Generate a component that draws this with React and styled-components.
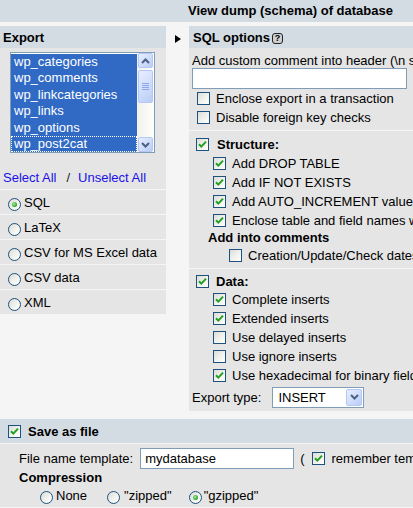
import React from "react";
import styled, { createGlobalStyle } from "styled-components";

const GlobalStyle = createGlobalStyle`
  html, body {
    margin: 0;
    padding: 0;
    background: #f5f5f5;
    overflow: hidden;
  }
  body {
    font-family: "Liberation Sans", Arial, sans-serif;
    font-size: 13px;
    color: #000;
  }
`;

const Page = styled.div`
  width: 413px;
  height: 508px;
  overflow: hidden;
`;

const TitleBar = styled.div`
  height: 22px;
  line-height: 22px;
  background: #d3dce3;
  font-weight: bold;
  padding-left: 188px;
  white-space: nowrap;
`;

const Main = styled.div`
  display: flex;
  align-items: flex-start;
  margin-top: 4px;
`;

const LeftPanel = styled.div`
  width: 166px;
  flex: none;
`;

const PanelHead = styled.div`
  height: 22px;
  background: #d3dce3;
  font-weight: bold;
  padding-left: ${p => p.$pad}px;
  display: flex;
  align-items: center;
  white-space: nowrap;
`;

const LeftBody = styled.div`
  background: #e5e5e5;
`;

const ListCell = styled.div`
  height: 118px;
  box-sizing: border-box;
  padding: 4px 0 0 10px;
`;

const ListBox = styled.div`
  width: 145px;
  height: 101px;
  box-sizing: border-box;
  border: 1px solid #7f9db9;
  background: #fff;
  display: flex;
`;

const Options = styled.div`
  flex: 1;
  overflow: hidden;
  padding-top: 1px;
`;

const Option = styled.div`
  height: 16.4px;
  line-height: 16.4px;
  padding-left: 3px;
  background: #316ac5;
  color: #fff;
  white-space: nowrap;
  outline: ${p => (p.$focus ? "1px dotted #fff" : "none")};
  outline-offset: -1px;
`;

const ScrollTrack = styled.div`
  width: 17px;
  flex: none;
  background: linear-gradient(90deg, #f3f1ec, #fefefb);
  display: flex;
  flex-direction: column;
  align-items: center;
`;

const ScrollPart = styled.div`
  width: 15px;
  height: ${p => p.$h}px;
  margin-top: ${p => p.$mt || 0}px;
  box-sizing: border-box;
  border: 1px solid #b4c8f6;
  border-radius: 2px;
  background: linear-gradient(135deg, #e8effe, #bacdf8);
  display: flex;
  align-items: center;
  justify-content: center;
`;

const Spacer = styled.div`
  flex: 1;
`;

const SelectLinks = styled.div`
  height: 23px;
  line-height: 23px;
  padding-left: 3px;
  color: #1a10e8;
  white-space: nowrap;
`;

const Slash = styled.span`
  color: #222;
  margin: 0 8px 0 10px;
`;

const FormatRow = styled.div`
  display: flex;
  align-items: center;
  height: 24px;
  border-top: 1px solid #f5f5f5;
  padding-left: 8px;
  gap: 3px;
  white-space: nowrap;
`;

const ArrowCol = styled.div`
  width: 23px;
  flex: none;
  padding: 5px 0 0 9px;
  box-sizing: border-box;
`;

const RightPanel = styled.div`
  width: 340px;
  flex: none;
`;

const Help = styled.span`
  display: inline-flex;
  width: 11px;
  height: 11px;
  box-sizing: border-box;
  border: 1px solid #222;
  border-radius: 3px;
  background: #cfcfcf;
  font-size: 9px;
  line-height: 1;
  font-weight: bold;
  align-items: center;
  justify-content: center;
  margin-left: 2px;
  margin-top: 2px;
`;

const Section = styled.div`
  background: #e5e5e5;
  padding: ${p => p.$pad};
  & + & {
    border-top: 1px solid #f5f5f5;
  }
`;

const Caption = styled.div`
  height: 15px;
  line-height: 15px;
  white-space: nowrap;
`;

const TextInput = styled.div`
  width: ${p => p.$w}px;
  height: 21px;
  box-sizing: border-box;
  border: 1px solid #7f9db9;
  background: #fff;
  padding-left: 4px;
  line-height: 19px;
  flex: none;
`;

const CheckRow = styled.div`
  display: flex;
  align-items: center;
  height: ${p => p.$h || 19}px;
  padding-left: ${p => p.$indent || 0}px;
  gap: ${p => p.$gap || 6}px;
  white-space: nowrap;
  font-weight: ${p => (p.$bold ? "bold" : "normal")};
`;

const SubTitle = styled.div`
  height: ${p => p.$h}px;
  line-height: ${p => p.$h}px;
  padding-left: ${p => p.$indent}px;
  font-weight: bold;
  white-space: nowrap;
`;

const Box = styled.span`
  width: 13px;
  height: 13px;
  box-sizing: border-box;
  flex: none;
  border: 1px solid #1c5180;
  background: linear-gradient(135deg, #dcdcd7 0%, #f2f2ee 55%, #fff 100%);
  display: inline-flex;
  align-items: center;
  justify-content: center;
  font-weight: normal;
`;

const RadioDot = styled.span`
  width: 13px;
  height: 13px;
  box-sizing: border-box;
  flex: none;
  border-radius: 50%;
  border: 1px solid #1c5180;
  background: linear-gradient(135deg, #dcdcd7 0%, #f2f2ee 55%, #fff 100%);
  display: inline-flex;
  align-items: center;
  justify-content: center;
  margin-top: 4px;
  &::after {
    content: "";
    display: ${p => (p.$on ? "block" : "none")};
    width: 5px;
    height: 5px;
    border-radius: 50%;
    background: radial-gradient(circle at 40% 40%, #a8eaa8, #21a121 70%);
  }
`;

const ExportRow = styled.div`
  display: flex;
  align-items: center;
  height: 24px;
  gap: 11px;
  white-space: nowrap;
`;

const SelectBox = styled.div`
  width: 92px;
  height: 21px;
  box-sizing: border-box;
  border: 1px solid #7f9db9;
  background: #fff;
  display: flex;
  align-items: center;
  justify-content: space-between;
  padding: 0 1px 0 5px;
`;

const DropBtn = styled.div`
  width: 16px;
  height: 17px;
  box-sizing: border-box;
  border: 1px solid #b4c8f6;
  border-radius: 2px;
  background: linear-gradient(135deg, #e8effe, #bacdf8);
  display: flex;
  align-items: center;
  justify-content: center;
`;

const SaveBar = styled.div`
  margin-top: 8px;
  height: 24px;
  background: #d3dce3;
  border-bottom: 1px solid #f5f5f5;
  display: flex;
  align-items: center;
  padding-left: 8px;
  gap: 7px;
  font-weight: bold;
`;

const SaveBody = styled.div`
  background: #e5e5e5;
  height: 63px;
  box-sizing: border-box;
  padding: 4px 0 0 19px;
`;

const FileRow = styled.div`
  display: flex;
  align-items: center;
  height: 21px;
  white-space: nowrap;
`;

const Gap = styled.span`
  width: ${p => p.$w}px;
  flex: none;
`;

const RadioLine = styled.div`
  display: flex;
  align-items: center;
  height: 18px;
  padding-left: 21px;
  white-space: nowrap;
`;

const RadioOpt = styled.span`
  display: inline-flex;
  align-items: center;
  gap: ${p => p.$gap}px;
  margin-right: ${p => p.$mr}px;
`;

const Check = ({ on }) => (
  <Box>
    {on && (
      <svg width="9" height="9" viewBox="0 0 9 9">
        <path d="M1 4.2 L3.3 6.6 L8 1.6" fill="none" stroke="#21a121" strokeWidth="2" />
      </svg>
    )}
  </Box>
);

const Chevron = ({ up }) => (
  <svg width="9" height="6" viewBox="0 0 9 6">
    <path
      d={up ? "M1 5 L4.5 1.5 L8 5" : "M1 1 L4.5 4.5 L8 1"}
      fill="none"
      stroke="#4d6185"
      strokeWidth="2"
    />
  </svg>
);

const Grip = () => (
  <svg width="7" height="8" viewBox="0 0 7 8">
    {[0, 2, 4, 6].map(y => (
      <rect key={y} x="0" y={y} width="7" height="1" fill="#8ca6ec" />
    ))}
  </svg>
);

const tables = [
  "wp_categories",
  "wp_comments",
  "wp_linkcategories",
  "wp_links",
  "wp_options",
  "wp_post2cat",
];

const formats = [
  ["SQL", true],
  ["LaTeX", false],
  ["CSV for MS Excel data", false],
  ["CSV data", false],
  ["XML", false],
];

const structure = [
  ["Add DROP TABLE", true],
  ["Add IF NOT EXISTS", true],
  ["Add AUTO_INCREMENT value", true],
  ["Enclose table and field names with backquotes", true],
];

const data = [
  ["Complete inserts", true],
  ["Extended inserts", true],
  ["Use delayed inserts", false],
  ["Use ignore inserts", false],
  ["Use hexadecimal for binary fields", true],
];

export default function App() {
  return (
    <Page>
      <GlobalStyle />
      <TitleBar>View dump (schema) of database</TitleBar>
      <Main>
        <LeftPanel>
          <PanelHead $pad={3}>Export</PanelHead>
          <LeftBody>
            <ListCell>
              <ListBox>
                <Options>
                  {tables.map((t, i) => (
                    <Option key={t} $focus={i === tables.length - 1}>
                      {t}
                    </Option>
                  ))}
                </Options>
                <ScrollTrack>
                  <ScrollPart $h={15}>
                    <Chevron up />
                  </ScrollPart>
                  <ScrollPart $h={33} $mt={2}>
                    <Grip />
                  </ScrollPart>
                  <Spacer />
                  <ScrollPart $h={15}>
                    <Chevron />
                  </ScrollPart>
                </ScrollTrack>
              </ListBox>
            </ListCell>
            <SelectLinks>
              Select All<Slash>/</Slash>Unselect All
            </SelectLinks>
            {formats.map(([name, on]) => (
              <FormatRow key={name}>
                <RadioDot $on={on} />
                {name}
              </FormatRow>
            ))}
          </LeftBody>
        </LeftPanel>
        <ArrowCol>
          <svg width="6" height="8" viewBox="0 0 6 8">
            <path d="M0 0 L6 4 L0 8 Z" fill="#000" />
          </svg>
        </ArrowCol>
        <RightPanel>
          <PanelHead $pad={4}>
            SQL options<Help>?</Help>
          </PanelHead>
          <Section $pad="5px 0 3px 3px">
            <Caption>Add custom comment into header (\n separates lines)</Caption>
            <TextInput $w={215} />
            <CheckRow $indent={5}>
              <Check />
              Enclose export in a transaction
            </CheckRow>
            <CheckRow $indent={5}>
              <Check />
              Disable foreign key checks
            </CheckRow>
          </Section>
          <Section $pad="4px 0 4px 3px">
            <CheckRow $indent={4} $gap={8} $bold>
              <Check on />
              Structure:
            </CheckRow>
            {structure.map(([label, on]) => (
              <CheckRow key={label} $indent={21}>
                <Check on={on} />
                {label}
              </CheckRow>
            ))}
            <SubTitle $h={16} $indent={16}>
              Add into comments
            </SubTitle>
            <CheckRow $indent={37} $h={18}>
              <Check />
              Creation/Update/Check dates
            </CheckRow>
          </Section>
          <Section $pad="3px 0 2px 3px">
            <CheckRow $indent={4} $gap={7} $h={18} $bold>
              <Check on />
              Data:
            </CheckRow>
            {data.map(([label, on]) => (
              <CheckRow key={label} $indent={21}>
                <Check on={on} />
                {label}
              </CheckRow>
            ))}
            <ExportRow>
              Export type:
              <SelectBox>
                INSERT
                <DropBtn>
                  <Chevron />
                </DropBtn>
              </SelectBox>
            </ExportRow>
          </Section>
        </RightPanel>
      </Main>
      <SaveBar>
        <Check on />
        Save as file
      </SaveBar>
      <SaveBody>
        <FileRow>
          File name template:
          <Gap $w={7} />
          <TextInput $w={154}>mydatabase</TextInput>
          <Gap $w={6} />(<Gap $w={7} />
          <Check on />
          <Gap $w={7} />
          remember template
        </FileRow>
        <SubTitle $h={17} $indent={0}>
          Compression
        </SubTitle>
        <RadioLine>
          <RadioOpt $gap={3} $mr={20}>
            <RadioDot />
            None
          </RadioOpt>
          <RadioOpt $gap={4} $mr={17}>
            <RadioDot />
            "zipped"
          </RadioOpt>
          <RadioOpt $gap={2} $mr={0}>
            <RadioDot $on />
            "gzipped"
          </RadioOpt>
        </RadioLine>
      </SaveBody>
    </Page>
  );
}
